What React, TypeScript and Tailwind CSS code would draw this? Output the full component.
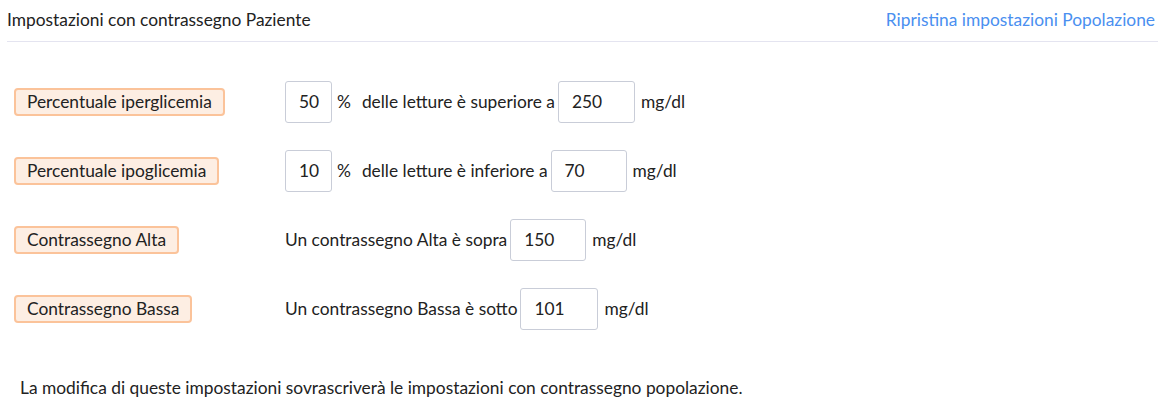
import React from 'react';

function Badge({ label }: { label: string }) {
  return (
    <span className="inline-flex h-[28px] items-center rounded-[4px] border-2 border-[#fbc39a] bg-[#fdeee3] px-[11px] text-[#222]">
      {label}
    </span>
  );
}

function NumBox({ value, w }: { value: string; w: string }) {
  return (
    <div
      className={`flex h-[42px] items-center rounded-[3px] border border-[#c9cdd8] bg-white pl-[13px] text-[#222] ${w}`}
    >
      {value}
    </div>
  );
}

export default function App() {
  return (
    <div className="min-h-[404px] w-[1165px] bg-white px-[7px] font-['Lato','Open_Sans',sans-serif] text-[17.35px] text-[#222]">
      <div className="flex h-[42px] items-center justify-between border-b border-[#e4e4f0] pb-[1px] pr-[3px]">
        <span>Impostazioni con contrassegno Paziente</span>
        <a className="cursor-pointer text-[#4a8ff0]">Ripristina impostazioni Popolazione</a>
      </div>

      <div className="pl-[7px] pt-[39px]">
        <div className="flex h-[42px] items-center">
          <div className="w-[271px]">
            <Badge label="Percentuale iperglicemia" />
          </div>
          <NumBox value="50" w="w-[47px]" />
          <span className="ml-[5px]">%</span>
          <span className="ml-[11px]">delle letture è superiore a</span>
          <div className="ml-[3px]">
            <NumBox value="250" w="w-[77px]" />
          </div>
          <span className="ml-[6px]">mg/dl</span>
        </div>

        <div className="mt-[27px] flex h-[42px] items-center">
          <div className="w-[271px]">
            <Badge label="Percentuale ipoglicemia" />
          </div>
          <NumBox value="10" w="w-[47px]" />
          <span className="ml-[5px]">%</span>
          <span className="ml-[11px]">delle letture è inferiore a</span>
          <div className="ml-[3px]">
            <NumBox value="70" w="w-[76px]" />
          </div>
          <span className="ml-[6px]">mg/dl</span>
        </div>

        <div className="mt-[27px] flex h-[42px] items-center">
          <div className="w-[271px]">
            <Badge label="Contrassegno Alta" />
          </div>
          <span>Un contrassegno Alta è sopra</span>
          <div className="ml-[3px]">
            <NumBox value="150" w="w-[76px]" />
          </div>
          <span className="ml-[6px]">mg/dl</span>
        </div>

        <div className="mt-[27px] flex h-[42px] items-center">
          <div className="w-[271px]">
            <Badge label="Contrassegno Bassa" />
          </div>
          <span>Un contrassegno Bassa è sotto</span>
          <div className="ml-[3px]">
            <NumBox value="101" w="w-[78px]" />
          </div>
          <span className="ml-[6px]">mg/dl</span>
        </div>

        <p className="mt-[48px] pl-[6px] leading-[20px]">
          La modifica di queste impostazioni sovrascriverà le impostazioni con contrassegno popolazione.
        </p>
      </div>
    </div>
  );
}
